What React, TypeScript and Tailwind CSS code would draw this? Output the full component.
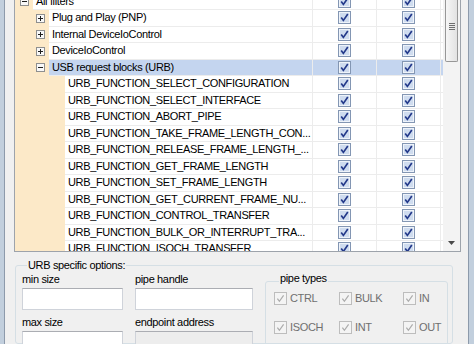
import type { ReactNode } from 'react';

type Row = { level: number; label: string; expander?: 'plus' | 'minus'; selected?: boolean };

const rows: Row[] = [
  { level: 0, label: 'All filters', expander: 'minus' },
  { level: 1, label: 'Plug and Play (PNP)', expander: 'plus' },
  { level: 1, label: 'Internal DeviceIoControl', expander: 'plus' },
  { level: 1, label: 'DeviceIoControl', expander: 'plus' },
  { level: 1, label: 'USB request blocks (URB)', expander: 'minus', selected: true },
  { level: 2, label: 'URB_FUNCTION_SELECT_CONFIGURATION' },
  { level: 2, label: 'URB_FUNCTION_SELECT_INTERFACE' },
  { level: 2, label: 'URB_FUNCTION_ABORT_PIPE' },
  { level: 2, label: 'URB_FUNCTION_TAKE_FRAME_LENGTH_CON...' },
  { level: 2, label: 'URB_FUNCTION_RELEASE_FRAME_LENGTH_...' },
  { level: 2, label: 'URB_FUNCTION_GET_FRAME_LENGTH' },
  { level: 2, label: 'URB_FUNCTION_SET_FRAME_LENGTH' },
  { level: 2, label: 'URB_FUNCTION_GET_CURRENT_FRAME_NU...' },
  { level: 2, label: 'URB_FUNCTION_CONTROL_TRANSFER' },
  { level: 2, label: 'URB_FUNCTION_BULK_OR_INTERRUPT_TRA...' },
  { level: 2, label: 'URB_FUNCTION_ISOCH_TRANSFER' },
];

// indentation strip widths per tree level
const indentW = ['w-[18px]', 'w-[34px]', 'w-[50px]'];

function Expander({ kind }: { kind: 'plus' | 'minus' }) {
  return (
    <svg width="9" height="9" viewBox="0 0 9 9">
      <rect x="0.5" y="0.5" width="8" height="8" fill="#f8f8f8" stroke="#8e8f8f" />
      <path d="M2 4.5H7" stroke="#1e1e1e" />
      {kind === 'plus' && <path d="M4.5 2V7" stroke="#1e1e1e" />}
    </svg>
  );
}

function ListCheck() {
  return (
    <svg width="13" height="13" viewBox="0 0 13 13">
      <rect x="0.5" y="0.5" width="12" height="12" fill="#eef3fa" stroke="#8396b3" />
      <rect x="2" y="2" width="9" height="9" fill="#cfdcef" />
      <path d="M3.2 6.4L5.4 9.4L9.8 3.1" fill="none" stroke="#23398a" strokeWidth="1.7" />
    </svg>
  );
}

function DisabledCheck() {
  return (
    <svg width="13" height="13" viewBox="0 0 13 13">
      <rect x="0.5" y="0.5" width="12" height="12" fill="#f4f4f4" stroke="#bdbdbd" />
      <path d="M3.4 6.6L5.4 9.3L9.6 3.4" fill="none" stroke="#ababab" strokeWidth="1.2" />
    </svg>
  );
}

function TreeRow({ row }: { row: Row }) {
  const sel = row.selected ? 'bg-[#c4d5ef]' : 'bg-white';
  return (
    <div className="flex h-[16.5px]">
      <div className="flex w-[298px] shrink-0">
        <div className={`flex h-full shrink-0 justify-end bg-[#fce9c8] ${indentW[row.level]}`}>
          {row.expander && (
            <div className="flex w-[17px] items-center justify-center">
              <Expander kind={row.expander} />
            </div>
          )}
        </div>
        <div
          className={`flex min-w-0 flex-1 items-center overflow-hidden whitespace-nowrap border-b border-r border-[#ececec] pl-[3px] leading-[13px] ${sel}`}
        >
          {row.label}
        </div>
      </div>
      <div className={`flex w-[64px] shrink-0 items-center justify-center border-b border-r border-[#ececec] ${sel}`}>
        <ListCheck />
      </div>
      <div className={`flex w-[64px] shrink-0 items-center justify-center border-b border-r border-[#ececec] ${sel}`}>
        <ListCheck />
      </div>
      <div className={`flex-1 border-b border-[#ececec] ${sel}`} />
    </div>
  );
}

function Scrollbar() {
  return (
    <div className="flex w-[17px] shrink-0 flex-col bg-[#f3f3f3]">
      <div className="mx-[2px] flex h-[62px] flex-col items-center rounded-b-[2px] border border-t-0 border-[#979797] bg-gradient-to-r from-[#f6f6f6] to-[#e2e2e2]">
        <div className="mt-[23px] flex flex-col gap-px">
          <div className="h-px w-[6px] bg-[#6e6e6e]" />
          <div className="h-px w-[6px] bg-[#6e6e6e]" />
          <div className="h-px w-[6px] bg-[#6e6e6e]" />
          <div className="h-px w-[6px] bg-[#6e6e6e]" />
        </div>
      </div>
      <div className="flex-1" />
      <div className="flex h-[17px] items-center justify-center">
        <svg width="7" height="4" viewBox="0 0 7 4">
          <path d="M0 0H7L3.5 4Z" fill="#4a4a4a" />
        </svg>
      </div>
    </div>
  );
}

function Field({ label, disabled, children }: { label: string; disabled?: boolean; children?: ReactNode }) {
  return (
    <div className="flex flex-col">
      <div className="leading-[13px]">{label}</div>
      <div
        className={`mt-[2px] h-[22px] border border-[#cfd3da] border-t-[#abadb3] ${disabled ? 'bg-[#ededed] border-[#c2c2c2]' : 'bg-white'}`}
      >
        {children}
      </div>
    </div>
  );
}

function PipeOption({ label }: { label: string }) {
  return (
    <div className="flex h-[15px] items-center gap-[3px] text-[#6f6f6f]">
      <DisabledCheck />
      <span className="leading-[13px]">{label}</span>
    </div>
  );
}

export default function App() {
  return (
    <div className="flex h-[344px] w-[474px] overflow-hidden bg-[#f0f0f0] font-['Liberation_Sans',Arial,sans-serif] text-[11px] tracking-[-0.35px] text-black">
      <div className="w-[4px] shrink-0 bg-[#c2cfdd]" />
      <div className="w-px shrink-0 bg-[#8d9aab]" />

      <div className="flex min-w-0 flex-1 flex-col pl-[9px] pr-[7px]">
        {/* filter tree */}
        <div className="flex h-[252px] shrink-0 overflow-hidden border-x border-b border-[#9da3ab] bg-white">
          <div className="min-w-0 flex-1">
            <div className="mt-[-6.5px]">
              {rows.map((r) => (
                <TreeRow key={r.label} row={r} />
              ))}
            </div>
          </div>
          <Scrollbar />
        </div>

        {/* URB options */}
        <fieldset className="ml-px mr-[8px] mt-[7px] min-h-0 flex-1 rounded-[3px] border border-[#d5dfe5] pl-[6px]">
          <legend className="ml-[5px] px-px leading-[13px]">URB specific options:</legend>
          <div className="grid grid-cols-[101px_118px_183px] gap-x-[12px]">
            <div className="flex flex-col pt-px">
              <Field label="min size" />
              <div className="mt-[6px]">
                <Field label="max size" />
              </div>
            </div>
            <div className="flex flex-col pt-px">
              <Field label="pipe handle" />
              <div className="mt-[6px]">
                <Field label="endpoint address" disabled />
              </div>
            </div>
            <fieldset className="h-[80px] rounded-[3px] border border-[#d5dfe5] pl-[8px]">
              <legend className="ml-[5px] h-[19px] px-px leading-[13px]">pipe types</legend>
              <div className="grid grid-cols-[65px_64px_1fr] gap-y-[14px]">
                <PipeOption label="CTRL" />
                <PipeOption label="BULK" />
                <PipeOption label="IN" />
                <PipeOption label="ISOCH" />
                <PipeOption label="INT" />
                <PipeOption label="OUT" />
              </div>
            </fieldset>
          </div>
        </fieldset>
      </div>

      <div className="w-px shrink-0 bg-[#8d9aab]" />
      <div className="w-[5px] shrink-0 bg-[#c2cfdd]" />
    </div>
  );
}
